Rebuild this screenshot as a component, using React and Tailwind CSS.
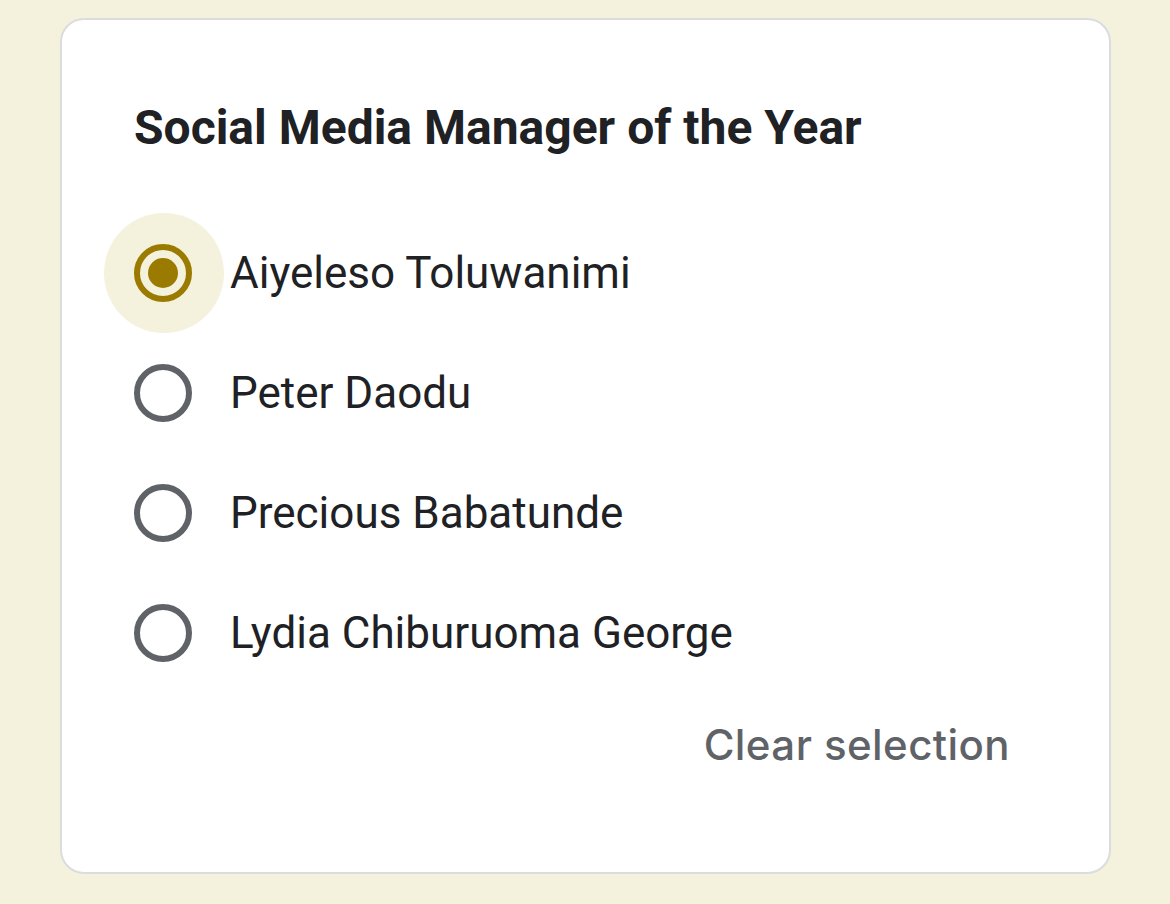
const options = ['Aiyeleso Toluwanimi', 'Peter Daodu', 'Precious Babatunde', 'Lydia Chiburuoma George'];

function Radio({ checked }) {
    return (
        <div className="relative flex h-[58px] w-[58px] shrink-0 items-center justify-center">
            {checked && <div className="absolute left-[-30px] top-[-31px] h-[120px] w-[120px] rounded-full bg-[#f4f1dc]" />}
            <div
                className={
                    checked
                        ? 'relative flex h-[58px] w-[58px] items-center justify-center rounded-full border-[6px] border-[#9a7b00]'
                        : 'relative flex h-[58px] w-[58px] items-center justify-center rounded-full border-[6px] border-[#5f6368]'
                }
            >
                {checked && <div className="h-[30px] w-[30px] rounded-full bg-[#9a7b00]" />}
            </div>
        </div>
    );
}

export default function App() {
    return (
        <div className="min-h-[904px] bg-[#f4f1dc] pl-[60px] pt-[18px]" style={{ fontFamily: 'Roboto, sans-serif' }}>
            <div className="flex h-[856px] w-[1051px] flex-col rounded-[24px] border-2 border-[#dadce0] bg-white pl-[72px] pr-[99px] pt-[78px]">
                <div className="flex h-[60px] items-center">
                    <h1 className="text-[48px] font-bold text-[#202124]">Social Media Manager of the Year</h1>
                </div>

                <div className="mt-[55px] flex flex-col">
                    {options.map((name, i) => (
                        <div key={name} className="flex h-[120px] items-center gap-[38px]">
                            <Radio checked={i === 0} />
                            <span className="text-[44px] text-[#202124]">{name}</span>
                        </div>
                    ))}
                </div>

                <div className="mt-[21px] flex h-[60px] items-center justify-end">
                    <span
                        className="text-[42px] font-medium tracking-[0.01em] text-[#5f6368]"
                        style={{ fontFamily: 'Inter, sans-serif' }}
                    >
                        Clear selection
                    </span>
                </div>
            </div>
        </div>
    );
}
